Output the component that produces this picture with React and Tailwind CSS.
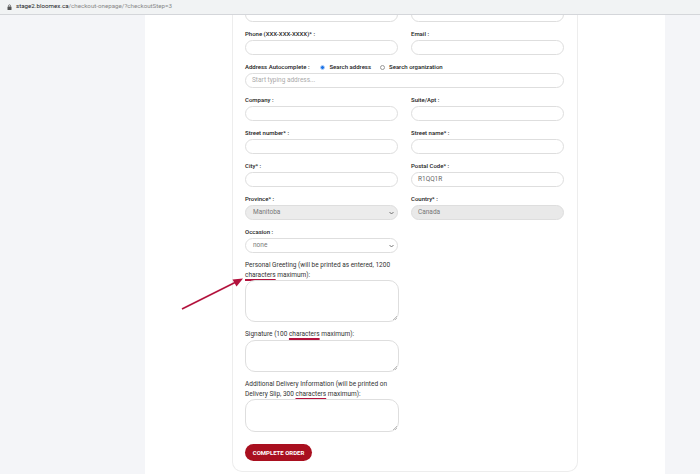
import React from "react"

const font = { fontFamily: "Roboto, 'Liberation Sans', sans-serif" }

const Label = ({ children }) => (
  <div className="h-[10px] leading-[10px] text-[6px] font-medium text-[#222] mb-[1px] whitespace-nowrap">{children}</div>
)

const Input = ({ value, placeholder, disabled }) => (
  <div
    className={`h-[15px] rounded-full border border-[#dedede] px-[6px] flex items-center text-[6.5px] ${
      disabled ? "bg-[#e9e9e9] text-[#777]" : "bg-white text-[#666]"
    }`}
  >
    {value}
    {placeholder && <span className="text-[#aaa]">{placeholder}</span>}
  </div>
)

const Select = ({ value, disabled }) => (
  <div
    className={`h-[15px] rounded-full border border-[#dedede] pl-[7px] pr-[3px] flex items-center justify-between text-[6.5px] text-[#777] ${
      disabled ? "bg-[#ececec]" : "bg-white"
    }`}
  >
    <span>{value}</span>
    <svg width="5" height="4" viewBox="0 0 10 6">
      <path d="M1 1l4 4 4-4" fill="none" stroke="#555" strokeWidth="1.6" />
    </svg>
  </div>
)

const Field = ({ label, children }) => (
  <div className="flex-1">
    <Label>{label}</Label>
    {children}
  </div>
)

const Mark = ({ children }) => (
  <span className="underline decoration-[#b3123d] decoration-[1.5px] underline-offset-[2px]">{children}</span>
)

const TextArea = ({ h }) => (
  <div className={`${h} w-[154px] rounded-[10px] border border-[#dedede] bg-white relative`}>
    <svg className="absolute right-[1px] bottom-[1px]" width="4" height="4" viewBox="0 0 4 4">
      <path d="M4 0L0 4M4 2L2 4" stroke="#999" strokeWidth="0.6" />
    </svg>
  </div>
)

const App = () => {
  return (
    <div className="w-[700px] h-[474px] bg-[#f4f5f8] overflow-hidden relative" style={font}>
      {/* browser address bar */}
      <div className="h-[15px] bg-[#f1f3f4] border-b border-[#d4d6da] flex items-center pl-[7px] gap-[4px] text-[6.2px]">
        <svg width="5" height="6" viewBox="0 0 10 12">
          <rect x="1" y="5" width="8" height="7" rx="1" fill="#555" />
          <path d="M3 5V3.5a2 2 0 0 1 4 0V5" fill="none" stroke="#555" strokeWidth="1.4" />
        </svg>
        <span className="text-[#222]">
          stage2.bloomex.ca<span className="text-[#888]">/checkout-onepage/?checkoutStep=3</span>
        </span>
      </div>

      <div className="ml-[145px] w-[520px] h-[459px] bg-white overflow-hidden">
        <div className="ml-[87px] w-[346px] border border-[#ededed] border-t-0 rounded-b-[10px] pl-[12px] pr-[13px] pb-[10px]">
          <div className="flex gap-[13px] -mt-[8px]">
            <div className="flex-1"><Input /></div>
            <div className="flex-1"><Input /></div>
          </div>

          <div className="flex flex-col gap-[7px] mt-[7px]">
            <div className="flex gap-[13px]">
              <Field label="Phone (XXX-XXX-XXXX)* :"><Input /></Field>
              <Field label="Email :"><Input /></Field>
            </div>

            <div>
              <div className="h-[10px] leading-[10px] text-[6px] text-[#222] mb-[1px] flex items-center whitespace-nowrap">
                <span className="font-medium">Address Autocomplete :</span>
                <span className="ml-[11px] w-[5px] h-[5px] rounded-full bg-[#1a73e8] border border-[#b9d3f7]" />
                <span className="ml-[4px] font-medium">Search address</span>
                <span className="ml-[9px] w-[5px] h-[5px] rounded-full border border-[#999] bg-white" />
                <span className="ml-[4px] font-medium">Search organization</span>
              </div>
              <Input placeholder="Start typing address..." />
            </div>

            <div className="flex gap-[13px]">
              <Field label="Company :"><Input /></Field>
              <Field label="Suite/Apt :"><Input /></Field>
            </div>
            <div className="flex gap-[13px]">
              <Field label="Street number* :"><Input /></Field>
              <Field label="Street name* :"><Input /></Field>
            </div>
            <div className="flex gap-[13px]">
              <Field label="City* :"><Input /></Field>
              <Field label="Postal Code* :"><Input value="R1QQ1R" /></Field>
            </div>
            <div className="flex gap-[13px]">
              <Field label="Province* :"><Select value="Manitoba" disabled /></Field>
              <Field label="Country* :"><Input value="Canada" disabled /></Field>
            </div>
            <div className="flex gap-[13px]">
              <Field label="Occasion :"><Select value="none" /></Field>
              <div className="flex-1" />
            </div>

            <div>
              <div className="text-[6.5px] leading-[10px] text-[#333] whitespace-nowrap">
                Personal Greeting (will be printed as entered, 1200
                <br />
                <Mark>characters</Mark> maximum):
              </div>
              <TextArea h="h-[42px]" />
            </div>

            <div>
              <div className="text-[6.5px] leading-[10px] text-[#333] mb-[1px] whitespace-nowrap">
                Signature (100 <Mark>characters</Mark> maximum):
              </div>
              <TextArea h="h-[32px]" />
            </div>

            <div>
              <div className="text-[6.5px] leading-[10px] text-[#333] whitespace-nowrap">
                Additional Delivery Information (will be printed on
                <br />
                Delivery Slip, 300 <Mark>characters</Mark> maximum):
              </div>
              <TextArea h="h-[33px]" />
            </div>

            <div className="mt-[5px]">
              <div className="w-[67px] h-[17px] rounded-full bg-[#a90f1f] text-white text-[6px] font-bold flex items-center justify-center">
                COMPLETE ORDER
              </div>
            </div>
          </div>
        </div>
      </div>

      {/* annotation arrow */}
      <svg className="absolute left-0 top-0 pointer-events-none" width="700" height="474">
        <line x1="182" y1="309" x2="236" y2="282" stroke="#b3123d" strokeWidth="1.6" />
        <path d="M243 278.5L232.5 279.5L236.5 286.5Z" fill="#b3123d" />
      </svg>
    </div>
  )
}

export default App
